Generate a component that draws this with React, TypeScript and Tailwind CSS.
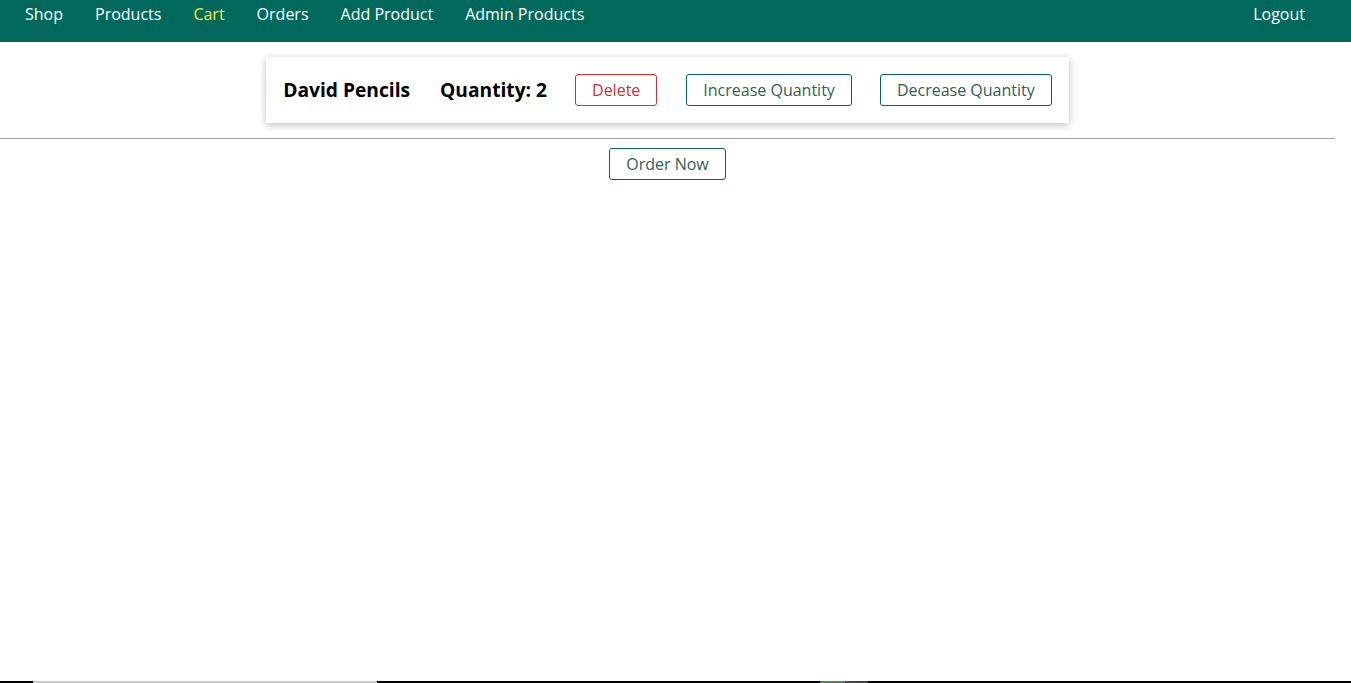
const navLinks = ["Shop", "Products", "Cart", "Orders", "Add Product", "Admin Products"];

const App = () => {
  return (
    <div className="flex h-[683px] flex-col bg-white font-['Open_Sans',sans-serif] text-black">
      <div className="flex-1">
        {/* HEADER */}
        <header className="flex h-[42px] items-start justify-between bg-[#00695c] pl-[25px] pr-[46px] pt-[2px]">
          <ul className="flex gap-8">
            {navLinks.map((link) => (
              <li key={link}>
                <a className={`text-base leading-6 ${link === "Cart" ? "text-[#ffeb3b]" : "text-white"}`}>{link}</a>
              </li>
            ))}
          </ul>
          <button className="text-base leading-6 text-white">Logout</button>
        </header>

        {/* CART */}
        <main className="flex w-[1335px] flex-col items-center">
          <ul className="mt-[15px]">
            <li className="flex items-center bg-white py-[17px] pl-[17px] pr-[17px] shadow-[0_2px_8px_rgba(0,0,0,0.26)]">
              <h1 className="mr-[30px] text-[19.2px] leading-6 font-bold">David Pencils</h1>
              <h2 className="mr-7 text-[19.2px] leading-6 font-bold">Quantity: 2</h2>
              <button className="mr-[29px] rounded-[3px] border border-[#d32f2f] px-4 py-[3px] text-base leading-6 text-[#d32f2f]">
                Delete
              </button>
              <button className="mr-7 rounded-[3px] border border-[#00695c] px-4 py-[3px] text-base leading-6 text-[#2f5f57]">
                Increase Quantity
              </button>
              <button className="rounded-[3px] border border-[#00695c] px-4 py-[3px] text-base leading-6 text-[#2f5f57]">
                Decrease Quantity
              </button>
            </li>
          </ul>
          <hr className="mt-[15px] w-full border-t border-[#9e9e9e]" />
          <button className="mt-[9px] rounded-[3px] border border-[#00695c] px-4 py-[3px] text-base leading-6 text-[#2f5f57]">
            Order Now
          </button>
        </main>
      </div>

      {/* bottom strip */}
      <div className="flex h-[2px] bg-black">
        <div className="w-[33px]" />
        <div className="w-[344px] bg-[#c8c8c8]" />
        <div className="w-[443px]" />
        <div className="w-[25px] bg-[#5b7f4f]" />
        <div className="w-[23px] bg-[#444]" />
      </div>
    </div>
  );
};

export default App;
